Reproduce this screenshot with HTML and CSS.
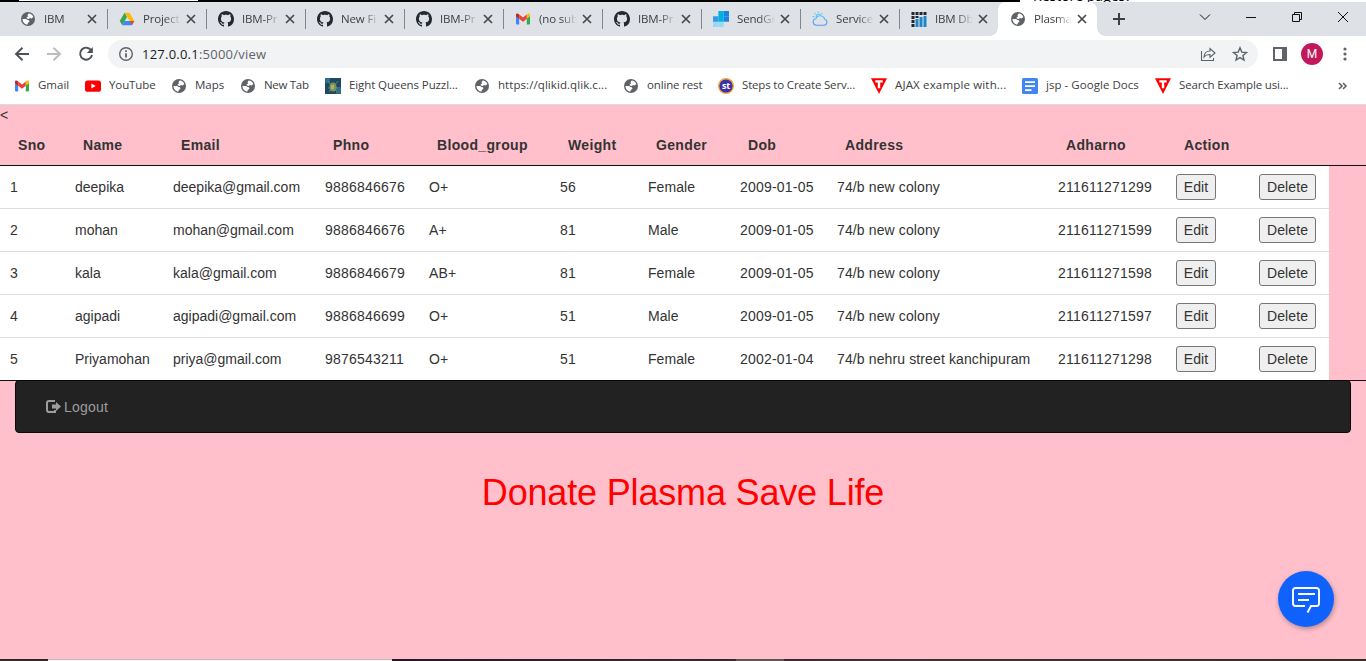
FILE: index.html
```html
<!DOCTYPE html>
<html lang="en">
<head>
<meta charset="utf-8">
<title>Plasma</title>
<link rel="stylesheet" href="styles.css">
</head>
<body>
<svg class="defs" aria-hidden="true">
  <symbol id="globe" viewBox="0 0 16 16"><circle cx="8" cy="8" r="7" fill="#5f6368"/><path fill="#fff" d="M8.600 2.600c2.200.1 4 1.400 4.700 3.300l-1.600 1.500-1.700-.3-1.200.9-1.900-.5-.3-1.300 1.500-.8-.6-1.200zM2.500 8h3.700l1.300 1 1.500.2.4 1.700-1.500.8-.4 1.900C4.500 13.400 2.500 11 2.500 8z"/></symbol>
  <symbol id="drive" viewBox="0 0 16 16"><path fill="#fbbc04" d="M5.600 1.800h4.800L15.300 10h-4.600z"/><path fill="#34a853" d="M5.600 1.800 8 6 3.300 14.200.7 10z"/><path fill="#4285f4" d="M5.500 10h9.800l-2.400 4.200H3.200z"/><path fill="#ea4335" d="M10.700 10h4.600l-2.200 3.800z"/></symbol>
  <symbol id="github" viewBox="0 0 16 16"><path fill="#24292f" d="M8 0C3.580 0 0 3.580 0 8c0 3.540 2.290 6.530 5.470 7.590.4.070.55-.17.55-.38 0-.19-.01-.82-.01-1.490-2.010.37-2.530-.49-2.690-.94-.09-.23-.48-.94-.82-1.130-.28-.15-.68-.52-.01-.53.63-.01 1.080.58 1.230.82.72 1.210 1.870.87 2.330.66.07-.52.28-.87.51-1.070-1.780-.2-3.640-.89-3.640-3.950 0-.87.31-1.590.82-2.150-.08-.2-.36-1.020.08-2.120 0 0 .67-.21 2.200.82.64-.18 1.320-.27 2-.27s1.360.09 2 .27c1.530-1.040 2.200-.82 2.200-.82.44 1.100.16 1.920.08 2.120.51.56.82 1.270.82 2.150 0 3.070-1.870 3.750-3.650 3.950.29.25.54.73.54 1.480 0 1.070-.01 1.930-.01 2.200 0 .21.15.46.55.38A8 8 0 0 0 16 8c0-4.420-3.580-8-8-8z"/></symbol>
  <symbol id="gmail" viewBox="0 0 16 16"><path fill="#4285f4" d="M1 4.500 4.200 7v6.500H2a1 1 0 0 1-1-1z"/><path fill="#34a853" d="M15 4.500 11.800 7v6.500H14a1 1 0 0 0 1-1z"/><path fill="#fbbc04" d="M11.800 3.600 13 2.700c.9-.6 2 0 2 1v1.600l-3.200 2.500z"/><path fill="#c5221f" d="M4.200 3.600 3 2.700c-.9-.6-2 0-2 1v1.600l3.200 2.500z"/><path fill="#ea4335" d="m4.200 3.600 3.800 3 3.800-3v4.200L8 10.700 4.200 7.800z"/></symbol>
  <symbol id="sendgrid" viewBox="0 0 16 16"><path fill="#9dd6f5" d="M0 5.300h5.400v10.700H0z"/><path fill="#1a82e2" d="M0 5.300h5.400v5.400H0z" opacity=".75"/><path fill="#8fdcf5" d="M5.400 10.700h5.300V16H5.400z"/><path fill="#00b2e3" d="M5.400 5.300h5.300v5.400H5.400zM5.400 0h5.300v5.300H5.400z"/><path fill="#1a82e2" d="M10.700 0H16v5.300h-5.300z"/><path fill="#1a82e2" d="M10.700 5.300H16v5.400h-5.300z"/></symbol>
  <symbol id="cloud" viewBox="0 0 16 16"><linearGradient id="sky" x2="0" y2="1"><stop stop-color="#63d3f8"/><stop offset="1" stop-color="#5596f5"/></linearGradient><path fill="none" stroke="url(#sky)" stroke-width="1.100" d="M4 14.200h8a3 3 0 0 0 .7-5.900A4.600 4.600 0 0 0 4 7.500a3.400 3.400 0 0 0 0 6.700zM4 5.800A3 3 0 0 1 9 4M6.300.5v1.600M2.500 2l1 1M.7 5.600h1.600M10.300 1.800l-1 1"/></symbol>
  <symbol id="db" viewBox="0 0 16 16"><path fill="#20272e" d="M.5 1h3v3h-3zM4.500 1h3v3h-3zM8.500 1h3v3h-3zM12.500 1h3v3h-3zM.5 5h3v3h-3zM4.500 5h3v2h-3zM.5 9h3v3h-3zM.5 13h3v3h-3z"/><path fill="#1d86c8" d="M4.500 8h3v8h-3zM8.500 6h3v10h-3zM12.500 5h3v11h-3z"/></symbol>
  <symbol id="youtube" viewBox="0 0 16 16"><rect y="2.400" width="16" height="11.400" rx="2.600" fill="#f00"/><path fill="#fff" d="m6.400 5.600 4.300 2.500-4.300 2.500z"/></symbol>
  <symbol id="queens" viewBox="0 0 16 16"><path fill="#1d4962" d="M0 0h16v16H0z"/><path fill="#2f6e86" d="M0 0h5v5H0zM11 9h5v7h-5z"/><path stroke="#5f8464" d="m3 3 3 4m7-4-3 4M3 10h3m4 0h3M4 14l2-3m6 3-2-3"/><ellipse cx="8" cy="9" rx="3.500" ry="4.600" fill="#7d9258"/><path fill="#a5b56d" d="M6 7h3v4H6z"/></symbol>
  <symbol id="study" viewBox="0 0 16 16"><circle cx="8" cy="8" r="7.300" fill="#3f31a3" stroke="#f0a33e" stroke-width="1.400"/><text class="study-text" x="8" y="11.300" text-anchor="middle">st</text></symbol>
  <symbol id="tri" viewBox="0 0 16 16"><path fill="#f00" d="M0 .2h16L8 16z"/><path fill="#fff" d="M4.300 2.300h7.400v2.200H9.200v5.700H6.800V4.500H4.300z"/></symbol>
  <symbol id="docs" viewBox="0 0 16 16"><rect width="16" height="16" rx="1.500" fill="#4285f4"/><path fill="#fff" d="M3 3.200h10v1.700H3zM3 7.200h10v1.700H3zM3 11.200h6.500v1.700H3z"/></symbol>
  <symbol id="close" viewBox="0 0 16 16"><path stroke="#45494d" stroke-width="1.700" d="m4 4 8 8m0-8-8 8"/></symbol>
</svg>

<div class="behind"><span class="behind-light"></span><span class="behind-text">Restore pages?</span></div>

<div class="tabs">
  <div class="tab"><svg><use href="#globe"/></svg><span>IBM</span><svg><use href="#close"/></svg></div>
  <div class="tab"><svg><use href="#drive"/></svg><span>Project</span><svg><use href="#close"/></svg></div>
  <div class="tab"><svg><use href="#github"/></svg><span>IBM-Pr</span><svg><use href="#close"/></svg></div>
  <div class="tab"><svg><use href="#github"/></svg><span>New Fi</span><svg><use href="#close"/></svg></div>
  <div class="tab"><svg><use href="#github"/></svg><span>IBM-Pr</span><svg><use href="#close"/></svg></div>
  <div class="tab"><svg><use href="#gmail"/></svg><span>(no sub</span><svg><use href="#close"/></svg></div>
  <div class="tab"><svg><use href="#github"/></svg><span>IBM-Pr</span><svg><use href="#close"/></svg></div>
  <div class="tab"><svg><use href="#sendgrid"/></svg><span>SendGr</span><svg><use href="#close"/></svg></div>
  <div class="tab"><svg><use href="#cloud"/></svg><span>Service</span><svg><use href="#close"/></svg></div>
  <div class="tab last"><svg><use href="#db"/></svg><span>IBM Db</span><svg><use href="#close"/></svg></div>
  <div class="tab active"><svg><use href="#globe"/></svg><span>Plasma</span><svg><use href="#close"/></svg></div>
  <svg class="plus" viewBox="0 0 16 16"><path stroke="#3c4043" stroke-width="2" d="M8 2v12M2 8h12"/></svg>
  <div class="window-buttons">
    <svg viewBox="0 0 14 14"><path d="m2 4.500 5 5 5-5"/></svg>
    <svg viewBox="0 0 14 14"><path d="M2 7.500h10"/></svg>
    <svg viewBox="0 0 14 14"><path d="M2.500 4.500h7v7h-7zM4.500 4.500v-2h7v7h-2"/></svg>
    <svg viewBox="0 0 14 14"><path d="m2 2 10 10m0-10L2 12"/></svg>
  </div>
</div>

<div class="toolbar">
  <svg class="nav" viewBox="0 0 16 16"><path d="M15 8H2m6.500-6.300L2 8l6.500 6.300"/></svg>
  <svg class="nav disabled" viewBox="0 0 16 16"><path d="M1 8h13M7.500 1.700 14 8l-6.500 6.300"/></svg>
  <svg class="nav" viewBox="0 0 16 16"><path d="M13.300 4.600A6 6 0 1 0 14 9"/><path class="solid" d="M14.800 1v6H8.800z"/></svg>
  <div class="omnibox">
    <svg class="info" viewBox="0 0 16 16"><circle cx="8" cy="8" r="6.300"/><path d="M8 7.200v4.200M8 4.200v1.700"/></svg>
    <span class="url"><b>127.0.0.1</b>:5000/view</span>
    <svg class="share" viewBox="0 0 16 16"><path d="M1.500 5v9.500h12V12M4 11c.3-4 2.500-6 6-6V2.500L15 7l-5 4.200V8.500C7.500 8.400 5.500 9 4 11z"/></svg>
    <svg class="star" viewBox="0 0 16 16"><path d="m8 1.800 1.800 4.300 4.700.4-3.600 3 1.100 4.600L8 11.600l-4 2.500 1.100-4.600-3.600-3 4.700-.4z"/></svg>
  </div>
  <svg class="panel" viewBox="0 0 14 14"><path fill="#5f6368" d="M0 0h14v14H0zM2 2v10h7V2z" fill-rule="evenodd"/></svg>
  <span class="avatar">M</span>
  <svg class="dots" viewBox="0 0 4 14"><circle cx="2" cy="2" r="1.600"/><circle cx="2" cy="7" r="1.600"/><circle cx="2" cy="12" r="1.600"/></svg>
</div>

<div class="bookmarks">
  <span class="mark m1"><svg><use href="#gmail"/></svg><span>Gmail</span></span>
  <span class="mark m2"><svg><use href="#youtube"/></svg><span>YouTube</span></span>
  <span class="mark m3"><svg><use href="#globe"/></svg><span>Maps</span></span>
  <span class="mark m4"><svg><use href="#globe"/></svg><span>New Tab</span></span>
  <span class="mark m5"><svg><use href="#queens"/></svg><span>Eight Queens Puzzl...</span></span>
  <span class="mark m6"><svg><use href="#globe"/></svg><span>https://qlikid.qlik.c...</span></span>
  <span class="mark m7"><svg><use href="#globe"/></svg><span>online rest</span></span>
  <span class="mark m8"><svg><use href="#study"/></svg><span>Steps to Create Serv...</span></span>
  <span class="mark m9"><svg><use href="#tri"/></svg><span>AJAX example with...</span></span>
  <span class="mark m10"><svg><use href="#docs"/></svg><span>jsp - Google Docs</span></span>
  <span class="mark m11"><svg><use href="#tri"/></svg><span>Search Example usi...</span></span>
  <svg class="more" viewBox="0 0 10 8"><path d="m1 1 3 3-3 3m4-6 3 3-3 3"/></svg>
</div>

<main class="page">
  <div class="stray">&lt;</div>
  <div class="table-wrap">
    <table>
      <colgroup><col class="c1"><col class="c2"><col class="c3"><col class="c4"><col class="c5"><col class="c6"><col class="c7"><col class="c8"><col class="c9"><col class="c10"><col class="c11"><col class="c12"></colgroup>
      <thead><tr><th>Sno</th><th>Name</th><th>Email</th><th>Phno</th><th>Blood_group</th><th>Weight</th><th>Gender</th><th>Dob</th><th>Address</th><th>Adharno</th><th>Action</th><th></th></tr></thead>
      <tbody>
        <tr><td>1</td><td>deepika</td><td>deepika@gmail.com</td><td>9886846676</td><td>O+</td><td>56</td><td>Female</td><td>2009-01-05</td><td>74/b new colony</td><td>211611271299</td><td><button>Edit</button></td><td><button class="del">Delete</button></td></tr>
        <tr><td>2</td><td>mohan</td><td>mohan@gmail.com</td><td>9886846676</td><td>A+</td><td>81</td><td>Male</td><td>2009-01-05</td><td>74/b new colony</td><td>211611271599</td><td><button>Edit</button></td><td><button class="del">Delete</button></td></tr>
        <tr><td>3</td><td>kala</td><td>kala@gmail.com</td><td>9886846679</td><td>AB+</td><td>81</td><td>Female</td><td>2009-01-05</td><td>74/b new colony</td><td>211611271598</td><td><button>Edit</button></td><td><button class="del">Delete</button></td></tr>
        <tr><td>4</td><td>agipadi</td><td>agipadi@gmail.com</td><td>9886846699</td><td>O+</td><td>51</td><td>Male</td><td>2009-01-05</td><td>74/b new colony</td><td>211611271597</td><td><button>Edit</button></td><td><button class="del">Delete</button></td></tr>
        <tr><td>5</td><td>Priyamohan</td><td>priya@gmail.com</td><td>9876543211</td><td>O+</td><td>51</td><td>Female</td><td>2002-01-04</td><td>74/b nehru street kanchipuram</td><td>211611271298</td><td><button>Edit</button></td><td><button class="del">Delete</button></td></tr>
      </tbody>
    </table>
  </div>
  <nav class="navbar">
    <svg viewBox="0 0 15 13"><path fill="none" stroke="#9d9d9d" stroke-width="2" d="M9 1H3a2 2 0 0 0-2 2v7a2 2 0 0 0 2 2h6V10"/><path fill="#9d9d9d" d="M6 4.500h4V2l5 4.500-5 4.500V8.500H6z"/></svg>
    <span>Logout</span>
  </nav>
  <h1>Donate Plasma Save Life</h1>
</main>
<div class="chat"><svg viewBox="0 0 28 28"><path d="M13 19H3.500A2.500 2.500 0 0 1 1 16.500v-13A2.500 2.500 0 0 1 3.500 1h21A2.500 2.500 0 0 1 27 3.500v13a2.500 2.500 0 0 1-2.500 2.500H19l-3.500 6.500M6 7h17M6 13h11"/></svg></div>
<div class="taskbar"><span class="taskbar-light"></span><span class="taskbar-item"></span></div>
</body>
</html>
```
FILE: styles.css
```css
* { box-sizing: border-box; }
body { margin: 0; width: 1366px; height: 661px; overflow: hidden; background: #ffc0cb; font: 12px "Open Sans", "Noto Sans", sans-serif; color: #3c4043; display: flex; flex-direction: column; }
svg { fill: none; flex: none; display: block; }
.defs { position: absolute; width: 0; height: 0; }
.behind { height: 2px; flex: none; display: flex; overflow: hidden; background: linear-gradient(90deg, #000 1020px, #fff 1020px); }
.behind-light { width: 179px; height: 1px; margin-left: 19px; background: #fff; }
.behind-text { margin-left: 835px; margin-top: -12px; font: 14px/16px "Open Sans", sans-serif; color: #000; white-space: nowrap; }

.tabs { height: 34px; flex: none; display: flex; align-items: center; padding-left: 8px; background: #dee1e6; }
.tab { width: 99px; height: 34px; display: flex; align-items: center; padding-left: 12px; position: relative; }
.tab::after { content: ""; position: absolute; right: -1px; top: 7px; width: 1px; height: 20px; background: #80868b; }
.tab.last::after { right: 0; top: auto; bottom: 0; width: 8px; height: 8px; background: radial-gradient(circle at 0 0, #dee1e6 7.5px, #fff 8px); }
.tab svg { width: 16px; height: 16px; }
.tab span { width: 40px; height: 16px; line-height: 15px; margin: 0 0 0 8px; white-space: nowrap; font-size: 11.5px; letter-spacing: -.15px; -webkit-mask-image: linear-gradient(90deg, #000 22px, transparent 38px); mask-image: linear-gradient(90deg, #000 22px, transparent 38px); }
.tab.active { background: #fff; border-radius: 8px 8px 0 0; }
.tab.active::after { right: -8px; top: auto; bottom: 0; width: 8px; height: 8px; background: radial-gradient(circle at 100% 0, #dee1e6 7.5px, #fff 8px); }
.plus { width: 16px; height: 16px; margin-left: 14px; }
.window-buttons { display: flex; gap: 32px; margin: 0 16px 5px auto; }
.window-buttons svg { width: 14px; height: 14px; stroke: #111; }

.toolbar { height: 36px; flex: none; display: flex; align-items: center; background: #fff; padding-left: 14px; }
.nav { width: 16px; height: 16px; margin-right: 16px; stroke: #4e5256; stroke-width: 1.9; }
.nav.disabled { stroke: #babcbe; }
.nav .solid { fill: #4e5256; stroke: none; }
.omnibox { width: 1150px; height: 28px; margin-left: -2px; border-radius: 14px; background: #f1f3f4; display: flex; align-items: center; padding: 0 10px; }
.info, .share, .star { width: 16px; height: 16px; stroke: #5f6368; stroke-width: 1.4; }
.info path { stroke-width: 1.8; }
.share { margin-left: auto; margin-right: 16px; stroke-width: 1.1; }
.url { margin-left: 8px; font-size: 13px; letter-spacing: .23px; color: #5f6368; }
.url b { font-weight: 400; color: #202124; }
.panel { width: 14px; height: 14px; margin-left: 15px; }
.avatar { width: 22px; height: 22px; margin-left: 14px; border-radius: 50%; background: #c2185b; color: #fff; font: 12px/22px Roboto, sans-serif; text-align: center; }
.dots { width: 4px; height: 14px; margin-left: 20px; fill: #5f6368; }

.bookmarks { height: 33px; flex: none; display: flex; align-items: flex-start; padding: 6px 0 0 14px; background: #fff; border-bottom: 1px solid #dadce0; }
.mark { display: flex; align-items: center; gap: 8px; height: 16px; font-size: 11.5px; line-height: 16px; white-space: nowrap; flex: none; }
.mark span { padding-bottom: 2px; }
.mark svg { width: 16px; height: 16px; }
.study-text { font: bold 9px "Open Sans", sans-serif; fill: #fff; }
.m1 { width: 71px; }
.m2 { width: 86px; letter-spacing: -.1px; }
.m3 { width: 69px; }
.m4 { width: 85px; letter-spacing: -.3px; }
.m5 { width: 149px; letter-spacing: -.1px; }
.m6 { width: 149px; letter-spacing: .07px; }
.m7 { width: 95px; letter-spacing: -.15px; }
.m8 { width: 153px; letter-spacing: -.17px; }
.m9 { width: 151px; letter-spacing: .16px; }
.m10 { width: 133px; letter-spacing: .04px; }
.m11 { width: 160px; letter-spacing: -.16px; }
.more { width: 10px; height: 8px; margin: 4px 0 0 23px; stroke: #5f6368; stroke-width: 1.6; }

.page { flex: 1; font-family: "Liberation Sans", Arial, sans-serif; color: #333; }
.stray { height: 20px; font: 14px/21px "Liberation Sans", Arial, sans-serif; }
.table-wrap { border-bottom: 1px solid #111; background: linear-gradient(#111, #111) 0 40px / 100% 1px no-repeat; }
table { width: 1329px; table-layout: fixed; border-collapse: separate; border-spacing: 0; font-size: 14px; letter-spacing: .21px; }
th { height: 41px; padding: 0 0 2px 18px; text-align: left; letter-spacing: .34px; white-space: nowrap; }
td { height: 43px; padding: 0 0 0 10px; background: #fff; border-bottom: 1px solid #ddd; white-space: nowrap; }
td:nth-child(2), td:nth-child(3) { letter-spacing: 0; }
td:nth-child(7) { letter-spacing: .05px; }
td:nth-child(9) { letter-spacing: .12px; }
tbody tr:last-child td { height: 42px; border-bottom: 0; }
button { display: block; width: 40px; height: 26px; padding: 0; border: 1px solid #767676; border-radius: 3px; background: #efefef; color: #333; font: 14px "Liberation Sans", Arial, sans-serif; letter-spacing: .1px; }
.del { width: 57px; }
.c1 { width: 65px; } .c2 { width: 98px; } .c3 { width: 152px; } .c4 { width: 104px; }
.c5 { width: 131px; } .c6 { width: 88px; } .c7 { width: 92px; } .c8 { width: 97px; }
.c9 { width: 221px; } .c10 { width: 118px; } .c11 { width: 83px; } .c12 { width: 80px; }
.navbar { height: 53px; margin: -1px 15px 0; padding-left: 30px; border: 1px solid #080808; border-radius: 4px; background: #222; color: #9d9d9d; display: flex; align-items: center; gap: 3px; font-size: 14px; letter-spacing: .2px; }
.navbar svg { width: 15px; height: 13px; }
h1 { margin: 40px 0 0; text-align: center; font-size: 36px; line-height: 40px; font-weight: 400; letter-spacing: -.17px; color: red; }
.chat { position: absolute; left: 1278px; top: 571px; width: 56px; height: 56px; border-radius: 50%; background: #0f62fe; box-shadow: 1px 2px 5px rgba(0,0,0,.3); display: flex; align-items: center; justify-content: center; }
.chat svg { width: 28px; height: 28px; margin-top: 4px; stroke: #fff; stroke-width: 1.9; }
.taskbar { height: 2px; flex: none; display: flex; background: linear-gradient(90deg, #2b2924, #241a26 400px, #3a3134 900px, #332e25); }
.taskbar-light { width: 344px; margin-left: 48px; background: #f4f6f6; border-top: 1px solid #b9bfc0; }
.taskbar-item { width: 48px; margin-left: 344px; background: #5f5557; }
```
